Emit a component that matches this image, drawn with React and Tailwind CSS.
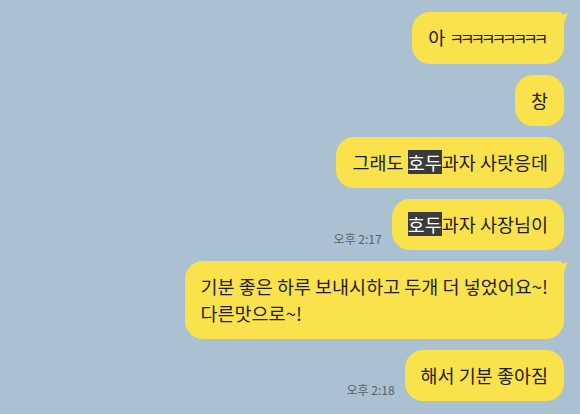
import React from "react";

const font = { fontFamily: '"Noto Sans CJK KR", "Noto Sans", sans-serif' };

const Tail = () => (
  <svg
    className="absolute top-0 -right-[4px] w-[21px] h-[24px]"
    viewBox="0 0 21 24"
    fill="#f9e24b"
  >
    <path d="M0 0 H8 Q12 0 14 4 Q17 2 21 1 Q18 6 17 12 V24 H0 Z" />
  </svg>
);

const Hl = ({ children }) => (
  <span className="inline-block bg-[#3b3b3b] text-white leading-[24px]">{children}</span>
);

const Bubble = ({ tail, children }) => (
  <div className="relative">
    {tail && <Tail />}
    <div
      className={
        "bg-[#f9e24b] text-[#1e1e1e] text-[18.5px] leading-[27px] px-4 py-3 rounded-[18px] " +
        (tail ? "rounded-tr-[6px]" : "")
      }
    >
      {children}
    </div>
  </div>
);

const Row = ({ time, children }) => (
  <div className="flex items-end gap-[10px]">
    {time && <span className="text-[12px] text-[#56616b] mb-[2px]">{time}</span>}
    {children}
  </div>
);

export default function App() {
  return (
    <div style={font} className="w-[580px] h-[414px] overflow-hidden bg-[#abc1d1] pt-3 pr-4">
      <div className="flex flex-col items-end gap-[11px]">
        <Row>
          <Bubble tail>
            아 <span className="text-[16px] tracking-[-4.2px] pr-[4px]">ㅋㅋㅋㅋㅋㅋㅋㅋㅋ</span>
          </Bubble>
        </Row>
        <Row>
          <Bubble>창</Bubble>
        </Row>
        <Row>
          <Bubble>
            그래도 <Hl>호두</Hl>과자 사랏응데
          </Bubble>
        </Row>
        <Row time="오후 2:17">
          <Bubble>
            <Hl>호두</Hl>과자 사장님이
          </Bubble>
        </Row>
        <Row>
          <Bubble tail>
            기분 좋은 하루 보내시하고 두개 더 넣었어요~!
            <br />
            다른맛으로~!
          </Bubble>
        </Row>
        <Row time="오후 2:18">
          <Bubble>해서 기분 좋아짐</Bubble>
        </Row>
      </div>
    </div>
  );
}
